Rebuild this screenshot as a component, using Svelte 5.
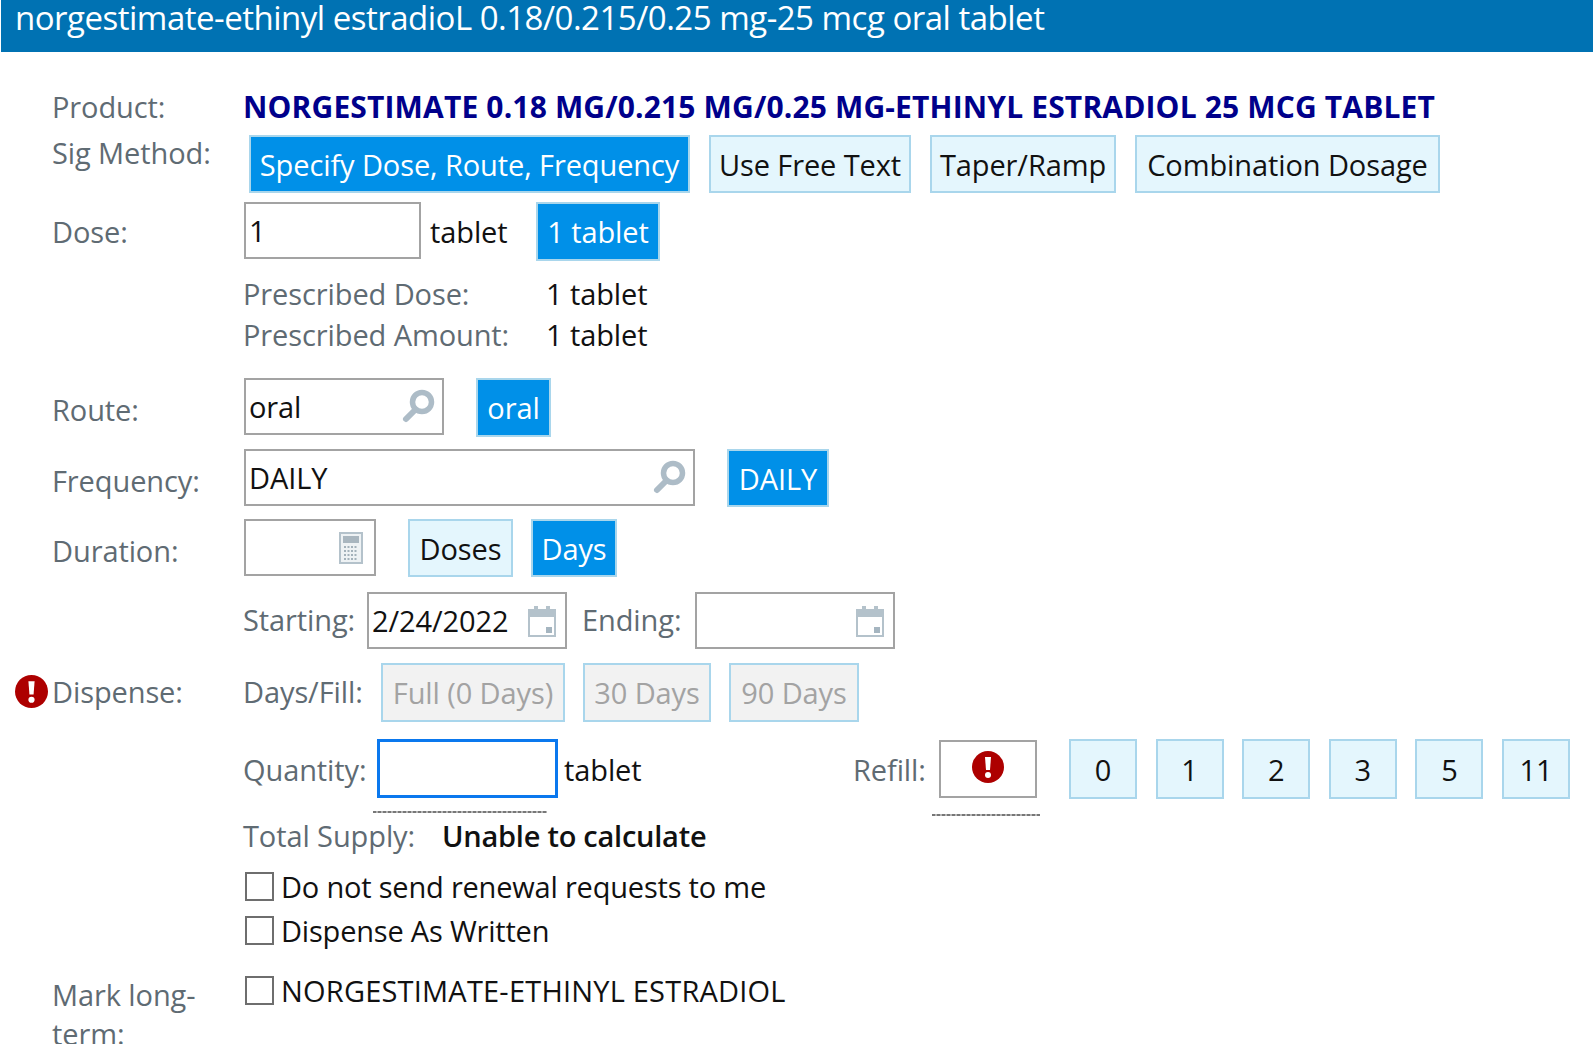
<script>
  const sigMethods = [
    { label: 'Specify Dose, Route, Frequency', width: 441, active: true },
    { label: 'Use Free Text', width: 202 },
    { label: 'Taper/Ramp', width: 186 },
    { label: 'Combination Dosage', width: 305 }
  ];
  const refills = ['0', '1', '2', '3', '5', '11'];
</script>

{#snippet search()}
  <svg class="icon" width="36" height="36" viewBox="0 0 36 36" aria-hidden="true">
    <circle cx="22" cy="13" r="9.5" fill="none" stroke="#adbcc7" stroke-width="5.5" />
    <path d="M15 21 L6 30" stroke="#adbcc7" stroke-width="6" stroke-linecap="round" />
  </svg>
{/snippet}

{#snippet calendar()}
  <svg class="icon" width="28" height="32" viewBox="0 0 28 32" aria-hidden="true">
    <path d="M1 5h26v26H1z" fill="#fff" stroke="#b4c2cb" stroke-width="2" />
    <path d="M1 5h26v7H1z" fill="#b4c2cb" />
    <path d="M6 1h4v6H6zM18 1h4v6h-4z" fill="#b4c2cb" />
    <path d="M18 22h6v6h-6z" fill="#a5b5c0" />
  </svg>
{/snippet}

{#snippet alert(size)}
  <svg width={size} height={size} viewBox="0 0 32 32" aria-hidden="true">
    <circle cx="16" cy="16" r="16" fill="#ad0000" />
    <path d="M13 6h6l-1 13h-4z" fill="#fff" />
    <circle cx="16" cy="24" r="3" fill="#fff" />
  </svg>
{/snippet}

<div class="screen">
  <header class="title">norgestimate-ethinyl estradioL 0.18/0.215/0.25 mg-25 mcg oral tablet</header>

  <form class="form" onsubmit={(e) => e.preventDefault()}>
    <div class="row product">
      <span class="label">Product:</span>
      <strong class="product-name">NORGESTIMATE 0.18 MG/0.215 MG/0.25 MG-ETHINYL ESTRADIOL 25 MCG TABLET</strong>
    </div>

    <div class="row sig">
      <span class="label top">Sig Method:</span>
      <div class="group sig-buttons">
        {#each sigMethods as method}
          <button type="button" class="btn" class:active={method.active} style="width: {method.width}px">{method.label}</button>
        {/each}
      </div>
    </div>

    <div class="row dose">
      <span class="label">Dose:</span>
      <div class="field w177">1</div>
      <span class="value unit">tablet</span>
      <button type="button" class="btn active one-tablet">1 tablet</button>
    </div>

    <div class="row text-row first">
      <span class="label"></span>
      <span class="sub-label prescribed">Prescribed Dose:</span>
      <span class="value">1 tablet</span>
    </div>
    <div class="row text-row">
      <span class="label"></span>
      <span class="sub-label prescribed">Prescribed Amount:</span>
      <span class="value">1 tablet</span>
    </div>

    <div class="row route">
      <span class="label low">Route:</span>
      <div class="field w200">oral {@render search()}</div>
      <button type="button" class="btn active oral">oral</button>
    </div>

    <div class="row frequency">
      <span class="label low">Frequency:</span>
      <div class="field w451">DAILY {@render search()}</div>
      <button type="button" class="btn active daily">DAILY</button>
    </div>

    <div class="row duration">
      <span class="label low">Duration:</span>
      <div class="field w132">
        <svg class="icon calc" width="24" height="32" viewBox="0 0 24 32" aria-hidden="true">
          <path d="M1 1h22v30H1z" fill="#eef2f4" stroke="#b4c2cb" stroke-width="2" />
          <path d="M4 4h16v7H4z" fill="#a9b6bf" />
          <path d="M5 15h14M5 19h14M5 23h14M5 27h14" stroke="#a3b1ba" stroke-width="2" stroke-dasharray="2 1.5" />
        </svg>
      </div>
      <button type="button" class="btn doses">Doses</button>
      <button type="button" class="btn active days">Days</button>
    </div>

    <div class="row dates">
      <span class="label"></span>
      <span class="sub-label starting">Starting:</span>
      <div class="field w200 date">2/24/2022 {@render calendar()}</div>
      <span class="sub-label ending">Ending:</span>
      <div class="field w200 date">{@render calendar()}</div>
    </div>

    <div class="row dispense">
      <span class="label">
        <span class="badge">{@render alert(33)}</span>
        Dispense:
      </span>
      <span class="sub-label days-fill">Days/Fill:</span>
      <button type="button" class="btn off full" disabled>Full (0 Days)</button>
      <button type="button" class="btn off d30" disabled>30 Days</button>
      <button type="button" class="btn off d90" disabled>90 Days</button>
    </div>

    <div class="row quantity">
      <span class="label"></span>
      <span class="sub-label qty-label">Quantity:</span>
      <div class="field qty">
        <i class="squiggle qty-line"></i>
      </div>
      <span class="value qty-unit">tablet</span>
      <span class="sub-label refill-label">Refill:</span>
      <div class="field refill">
        {@render alert(32)}
        <i class="squiggle refill-line"></i>
      </div>
      <div class="group refills">
        {#each refills as n}
          <button type="button" class="btn refill-btn">{n}</button>
        {/each}
      </div>
    </div>

    <div class="row text-row total">
      <span class="label"></span>
      <span class="sub-label supply">Total Supply:</span>
      <span class="value semi">Unable to calculate</span>
    </div>

    <div class="row check first-check">
      <span class="label"></span>
      <i class="box"></i>
      <span class="value">Do not send renewal requests to me</span>
    </div>
    <div class="row check">
      <span class="label"></span>
      <i class="box"></i>
      <span class="value">Dispense As Written</span>
    </div>

    <div class="row longterm">
      <span class="label two-line">Mark long-<br />term:</span>
      <i class="box"></i>
      <span class="value caps">NORGESTIMATE-ETHINYL ESTRADIOL</span>
    </div>
  </form>
</div>

<style>
  :global(body) {
    margin: 0;
    background: #fff;
  }

  .screen {
    width: 1593px;
    height: 1044px;
    overflow: hidden;
    font-family: "Open Sans", "Noto Sans", sans-serif;
    font-size: 29px;
    color: #111;
    letter-spacing: -0.1px;
  }

  .title {
    height: 52px;
    margin-left: 1px;
    padding-left: 14px;
    background: #0072b3;
    color: #fff;
    font-size: 33px;
    line-height: 36px;
    letter-spacing: -0.5px;
    white-space: nowrap;
  }

  .form {
    display: flex;
    flex-direction: column;
    padding: 40px 0 0 52px;
  }

  .row {
    display: flex;
    align-items: center;
    white-space: nowrap;
  }

  .label {
    position: relative;
    flex: 0 0 192px;
    color: #5f6b73;
  }

  .label.top {
    align-self: flex-start;
    line-height: 36px;
  }

  .label.low {
    padding-top: 4px;
  }

  .label.two-line {
    align-self: flex-start;
    line-height: 39px;
    margin-top: -1px;
  }

  .badge {
    position: absolute;
    left: -37px;
    top: 3px;
  }

  .product {
    height: 30px;
    margin-top: -1px;
    margin-bottom: 1px;
  }

  .product-name {
    margin-left: -1px;
    color: #00008b;
    font-size: 30px;
    font-weight: 700;
    letter-spacing: 0.15px;
  }

  .sig {
    height: 58px;
    margin-top: 13px;
  }

  .sig-buttons {
    display: flex;
    gap: 19px;
    margin-left: 5px;
  }

  .group {
    height: 100%;
  }

  .btn {
    box-sizing: border-box;
    height: 100%;
    padding: 0;
    border: 2px solid #a9d6ec;
    border-radius: 0;
    background: #e4f6fd;
    color: #111;
    font: inherit;
    letter-spacing: inherit;
  }

  .btn.active {
    background: #0090e8;
    color: #fff;
  }

  .btn.off {
    background: #f2f2f2;
    color: #a3a3a3;
  }

  .field {
    box-sizing: border-box;
    display: flex;
    align-items: center;
    justify-content: space-between;
    align-self: flex-start;
    height: 57px;
    padding: 0 3px;
    border: 2px solid #a3a3a3;
    background: #fff;
  }

  .w177 { width: 177px; }
  .w200 { width: 200px; }
  .w451 { width: 451px; }
  .w132 { width: 132px; }

  .icon {
    flex: none;
    margin-left: auto;
    margin-right: 3px;
  }

  .calc {
    margin-right: 8px;
  }

  .date {
    padding-right: 6px;
  }

  .sub-label {
    color: #5f6b73;
    margin-left: -1px;
  }

  .dates .sub-label,
  .dispense .sub-label,
  .dispense .label {
    padding-bottom: 2px;
  }

  .dose {
    height: 59px;
    margin-top: 9px;
  }

  .unit {
    width: 106px;
    margin-left: 9px;
  }

  .one-tablet {
    width: 124px;
  }

  .text-row {
    height: 41px;
    margin-top: 0;
  }

  .text-row.first {
    margin-top: 12px;
  }

  .prescribed {
    width: 303px;
  }

  .route {
    height: 59px;
    margin-top: 23px;
  }

  .oral {
    width: 75px;
    margin-left: 32px;
  }

  .frequency,
  .duration {
    height: 58px;
    margin-top: 12px;
  }

  .daily {
    width: 102px;
    margin-left: 32px;
  }

  .doses {
    width: 105px;
    margin-left: 32px;
  }

  .days {
    width: 86px;
    margin-left: 18px;
  }

  .dates {
    height: 57px;
    margin-top: 15px;
  }

  .starting {
    width: 124px;
  }

  .ending {
    width: 113px;
    margin-left: 15px;
  }

  .dispense {
    height: 59px;
    margin-top: 14px;
  }

  .days-fill {
    width: 138px;
  }

  .full {
    width: 184px;
  }

  .d30 {
    width: 128px;
    margin-left: 18px;
  }

  .d90 {
    width: 130px;
    margin-left: 18px;
  }

  .quantity {
    height: 60px;
    margin-top: 17px;
  }

  .qty-label {
    width: 134px;
  }

  .qty {
    position: relative;
    width: 181px;
    height: 59px;
    border: 3px solid #0a78ee;
  }

  .qty-unit {
    margin-left: 6px;
    width: 290px;
  }

  .refill-label {
    width: 86px;
  }

  .refill {
    position: relative;
    justify-content: center;
    width: 98px;
    height: 58px;
    margin-top: 1px;
    padding-bottom: 4px;
  }

  .refills {
    display: flex;
    gap: 18.6px;
    margin-left: 32px;
  }

  .refill-btn {
    width: 68px;
  }

  .squiggle {
    position: absolute;
    height: 2px;
    background: repeating-linear-gradient(90deg, #777 0 3px, #b5b5b5 3px 5px);
  }

  .qty-line {
    left: -7px;
    right: 8px;
    top: 69px;
  }

  .refill-line {
    left: -9px;
    right: -5px;
    top: 72px;
  }

  .total {
    margin-top: 16px;
  }

  .supply {
    width: 199px;
  }

  .semi {
    font-weight: 600;
    letter-spacing: -0.25px;
  }

  .check {
    height: 44px;
  }

  .check .value {
    letter-spacing: -0.2px;
  }

  .first-check {
    margin-top: 8px;
  }

  .box {
    box-sizing: border-box;
    flex: none;
    width: 29px;
    height: 29px;
    margin: 0 7px 0 1px;
    border: 2px solid #6e6e6e;
    background: #fff;
  }

  .longterm {
    align-items: flex-start;
    margin-top: 24px;
  }

  .longterm .caps {
    margin-top: -5px;
    letter-spacing: 0.2px;
  }
</style>
